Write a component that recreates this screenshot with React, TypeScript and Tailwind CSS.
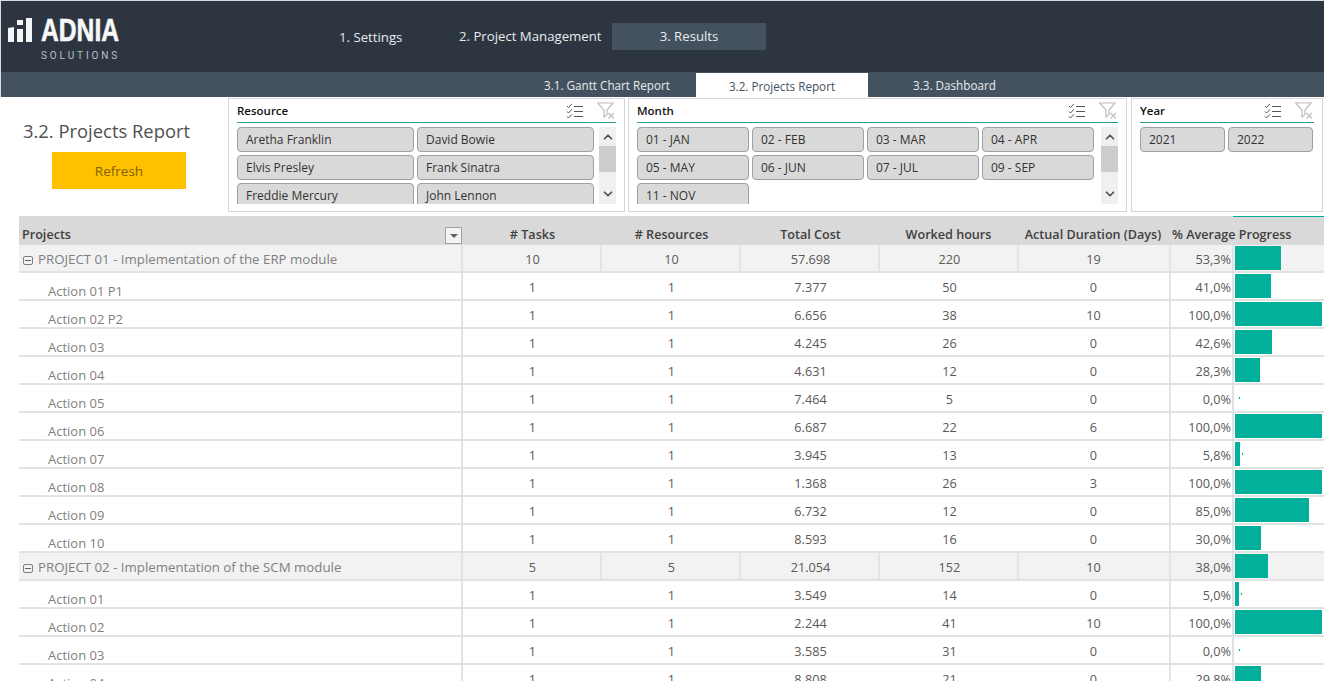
import type { ReactNode } from 'react';
import { ChevronDown, ChevronUp } from 'lucide-react';

interface Row {
  name: string;
  tasks: number;
  resources: number;
  cost: string;
  hours: number;
  days: number;
  progress: number;
  project?: boolean;
}

const rows: Row[] = [
  { name: 'PROJECT 01 - Implementation of the ERP module', tasks: 10, resources: 10, cost: '57.698', hours: 220, days: 19, progress: 53.3, project: true },
  { name: 'Action 01 P1', tasks: 1, resources: 1, cost: '7.377', hours: 50, days: 0, progress: 41 },
  { name: 'Action 02 P2', tasks: 1, resources: 1, cost: '6.656', hours: 38, days: 10, progress: 100 },
  { name: 'Action 03', tasks: 1, resources: 1, cost: '4.245', hours: 26, days: 0, progress: 42.6 },
  { name: 'Action 04', tasks: 1, resources: 1, cost: '4.631', hours: 12, days: 0, progress: 28.3 },
  { name: 'Action 05', tasks: 1, resources: 1, cost: '7.464', hours: 5, days: 0, progress: 0 },
  { name: 'Action 06', tasks: 1, resources: 1, cost: '6.687', hours: 22, days: 6, progress: 100 },
  { name: 'Action 07', tasks: 1, resources: 1, cost: '3.945', hours: 13, days: 0, progress: 5.8 },
  { name: 'Action 08', tasks: 1, resources: 1, cost: '1.368', hours: 26, days: 3, progress: 100 },
  { name: 'Action 09', tasks: 1, resources: 1, cost: '6.732', hours: 12, days: 0, progress: 85 },
  { name: 'Action 10', tasks: 1, resources: 1, cost: '8.593', hours: 16, days: 0, progress: 30 },
  { name: 'PROJECT 02 - Implementation of the SCM module', tasks: 5, resources: 5, cost: '21.054', hours: 152, days: 10, progress: 38, project: true },
  { name: 'Action 01', tasks: 1, resources: 1, cost: '3.549', hours: 14, days: 0, progress: 5 },
  { name: 'Action 02', tasks: 1, resources: 1, cost: '2.244', hours: 41, days: 10, progress: 100 },
  { name: 'Action 03', tasks: 1, resources: 1, cost: '3.585', hours: 31, days: 0, progress: 0 },
  { name: 'Action 04', tasks: 1, resources: 1, cost: '8.808', hours: 21, days: 0, progress: 29.8 },
];

function SlicerIcons() {
  return (
    <div className="flex items-center gap-[14px] pr-[1px]">
      <svg width="17" height="16" viewBox="0 0 17 16" fill="none" stroke="#555" strokeWidth="1">
        <path d="M1 3l1.5 1.5L6 .8M1 8.500l1.500 1.500L6 6.300M1 13.500L2.500 15 6 11.300" />
        <path d="M8 3.500h9M8 8.500h9M8 13.500h9" />
      </svg>
      <svg width="18" height="17" viewBox="0 0 18 17" fill="none" stroke="#bdbdbd" strokeWidth="1.2">
        <path d="M.5 1h15.500l-6 7v4.500L7 15V8z" />
        <path d="M11.500 11l5.500 5.500M17 11l-5.500 5.500" />
      </svg>
    </div>
  );
}

function SlicerScroll() {
  return (
    <div className="w-[17px] h-[77px] bg-[#f0f0f0] flex flex-col items-center justify-between text-[#505050] shrink-0">
      <div className="w-full flex flex-col items-center">
        <ChevronUp size={14} strokeWidth={3} className="mt-[3px] mb-[2px]" />
        <div className="w-full h-[26px] bg-[#cdcdcd]" />
      </div>
      <ChevronDown size={14} strokeWidth={3} className="mb-[3px]" />
    </div>
  );
}

function SlicerButton({ label, width }: { label: string; width: string }) {
  return (
    <div className={`h-[25px] shrink-0 rounded-[4px] border border-[#a0a0a0] bg-[#d9d9d9] pl-[8px] text-[12px] leading-[24px] text-[#333] ${width}`}>
      {label}
    </div>
  );
}

function Slicer({ title, width, items, buttonWidth, gridClass, scroll = true }: { title: string; width: string; items: string[]; buttonWidth: string; gridClass: string; scroll?: boolean }) {
  return (
    <div className={`h-[114px] shrink-0 border border-[#d6d6d6] px-[8px] ${width}`}>
      <div className="h-[24px] flex items-center justify-between border-b border-[#2f9e8f]">
        <span className="text-[11.5px] font-semibold text-[#111]">{title}</span>
        <SlicerIcons />
      </div>
      <div className="mt-[4px] flex justify-between">
        <div className={`h-[77px] overflow-hidden ${gridClass}`}>
          {items.map((item) => (
            <SlicerButton key={item} label={item} width={buttonWidth} />
          ))}
        </div>
        {scroll && <SlicerScroll />}
      </div>
    </div>
  );
}

function Cell({ children, width, line = true }: { children: ReactNode; width: string; line?: boolean }) {
  return (
    <div className={`h-full flex items-center justify-center shrink-0 pt-[4px] ${width} ${line ? 'border-r-2 border-[#e4e4e4] pl-[2px]' : ''}`}>
      {children}
    </div>
  );
}

function ProgressBar({ value }: { value: number }) {
  const showTick = value < 10;
  return (
    <div className="relative h-[26px] flex-1 py-[1px] pl-[1px]">
      <div className="h-full bg-[#00b09b]" style={{ width: `${value * 0.87}px` }} />
      {showTick && (
        <div className="absolute top-[12px] h-[2px] w-[1px] bg-[#00b09b]" style={{ left: `${value === 0 ? 5 : value * 0.87 + 3}px` }} />
      )}
    </div>
  );
}

function TableRow({ row }: { row: Row }) {
  const project = row.project;
  return (
    <div className={`h-[28px] flex border-b-2 border-[#e2e2e2] text-[12.7px] text-[#595959] ${project ? 'bg-[#f2f2f2]' : 'bg-white'}`}>
      <div className={`h-full w-[444px] shrink-0 whitespace-nowrap border-r-2 border-[#e2e2e2] flex text-[#7f7f7f] ${project ? 'items-center pl-[4px] pt-[4px] text-[13.27px]' : 'pl-[29px] pt-[9px] text-[13px]'}`}>
        {project && (
          <span className="mr-[5px] flex h-[9px] w-[10px] items-center justify-center rounded-[2px] border border-[#808080]">
            <span className="h-[1px] w-[6px] bg-[#606060]" />
          </span>
        )}
        {row.name}
      </div>
      <Cell width="w-[139px]" line={!!project}>{row.tasks}</Cell>
      <Cell width="w-[139px]" line={!!project}>{row.resources}</Cell>
      <Cell width="w-[139px]" line={!!project}>{row.cost}</Cell>
      <Cell width="w-[139px]" line={!!project}>{row.hours}</Cell>
      <div className="h-full w-[152px] shrink-0 border-r-2 border-[#e4e4e4] flex items-center justify-center pt-[4px] pr-[1px]">{row.days}</div>
      <div className="h-full w-[63px] shrink-0 border-r-2 border-[#e2e2e2] flex items-center justify-end pt-[4px] pr-[1px]">
        {row.progress.toFixed(1).replace('.', ',')}%
      </div>
      <ProgressBar value={row.progress} />
    </div>
  );
}

export default function App() {
  return (
    <div className="h-[681px] w-[1324px] overflow-hidden bg-white font-['Open_Sans',sans-serif]">
      <header className="h-[72px] border-t border-l border-[#d8dadc] bg-[#2d3640] flex text-[#e8ebee] text-[13.2px]">
        <div className="w-[338px] shrink-0 flex pl-[7px] pt-[17px]">
          <svg width="25" height="25" viewBox="0 0 25 25" fill="#f4f5f6" className="shrink-0">
            <path d="M0 10l6-1v15H0zM9 2h6v5H9zM9 11h6v13H9zM18 0h6v24h-6z" />
          </svg>
          <div className="ml-[8px] flex flex-col">
            <span className="origin-left scale-x-[0.77] whitespace-nowrap font-['Liberation_Sans',sans-serif] text-[32px] leading-[25px] font-bold text-[#f7f8f8] [-webkit-text-stroke:0.6px_#f7f8f8]">ADNIA</span>
            <span className="mt-[7px] whitespace-nowrap font-['Roboto',sans-serif] text-[10px] leading-[12px] tracking-[2.9px] text-[#b9c0c6]">SOLUTIONS</span>
          </div>
        </div>
        <div className="w-[120px] shrink-0 pt-[26px] leading-[20px]">1. Settings</div>
        <div className="w-[153px] shrink-0 pt-[25px] leading-[20px] whitespace-nowrap">2. Project Management</div>
        <div className="mt-[22px] h-[27px] w-[154px] bg-[#44525f] text-center leading-[27px]">3. Results</div>
      </header>
      <nav className="h-[25px] border-l border-[#d8dadc] bg-[#44525f] flex text-[11.7px] text-[#e8ebee]">
        <div className="w-[695px] shrink-0 pl-[543px] pt-[5px]">3.1. Gantt Chart Report</div>
        <div className="mt-[1px] w-[172px] shrink-0 bg-white text-center pt-[5px] text-[#44525f]">3.2. Projects Report</div>
        <div className="pl-[45px] pt-[5px]">3.3. Dashboard</div>
      </nav>
      <section className="flex h-[119px] pt-[1px]">
        <div className="w-[228px] shrink-0 pl-[23px] pt-[19px]">
          <h1 className="text-[18.4px] leading-[28px] whitespace-nowrap text-[#505050]">3.2. Projects Report</h1>
          <button className="ml-[29px] mt-[7px] h-[37px] w-[134px] bg-[#ffc000] pt-[2px] text-[13.5px] text-[#7f6000]">Refresh</button>
        </div>
        <div className="flex gap-[3px]">
          <Slicer title="Resource" width="w-[397px]" buttonWidth="w-[177px]" gridClass="flex w-[357px] flex-wrap gap-[3px]" items={['Aretha Franklin', 'David Bowie', 'Elvis Presley', 'Frank Sinatra', 'Freddie Mercury', 'John Lennon']} />
          <Slicer title="Month" width="w-[499px]" buttonWidth="w-[112px]" gridClass="flex w-[461px] flex-wrap gap-[3px]" items={['01 - JAN', '02 - FEB', '03 - MAR', '04 - APR', '05 - MAY', '06 - JUN', '07 - JUL', '09 - SEP', '11 - NOV']} />
          <Slicer title="Year" width="ml-[1px] w-[192px]" buttonWidth="w-[85px]" gridClass="flex w-[174px] flex-wrap gap-[3px]" scroll={false} items={['2021', '2022']} />
        </div>
      </section>
      <main className="ml-[19px]">
        <div className="relative h-[29px] flex items-end bg-[#d9d9d9] text-[12.6px] font-semibold text-[#404040] leading-[20px]">
          <div className="absolute right-0 top-0 h-[1px] w-[91px] bg-[#00b09b]" />
          <div className="relative h-full w-[444px] shrink-0 pl-[3px] pt-[9px]">
            Projects
            <span className="absolute right-[1px] top-[11px] flex h-[17px] w-[17px] items-center justify-center border border-[#a0a0a0] bg-[#f4f4f4]">
              <span className="h-0 w-0 border-x-[4px] border-t-[4px] border-x-transparent border-t-[#606060]" />
            </span>
          </div>
          <div className="h-full w-[139px] shrink-0 pt-[9px] text-center"># Tasks</div>
          <div className="h-full w-[139px] shrink-0 pt-[9px] text-center"># Resources</div>
          <div className="h-full w-[139px] shrink-0 pt-[9px] text-center">Total Cost</div>
          <div className="h-full w-[139px] shrink-0 pt-[9px] pr-[2px] text-center">Worked hours</div>
          <div className="h-full w-[152px] shrink-0 pt-[9px] pr-[4px] text-center whitespace-nowrap">Actual Duration (Days)</div>
          <div className="h-full pl-[1px] pt-[9px] whitespace-nowrap">% Average Progress</div>
        </div>
        {rows.map((row, index) => (
          <TableRow key={index} row={row} />
        ))}
      </main>
    </div>
  );
}
